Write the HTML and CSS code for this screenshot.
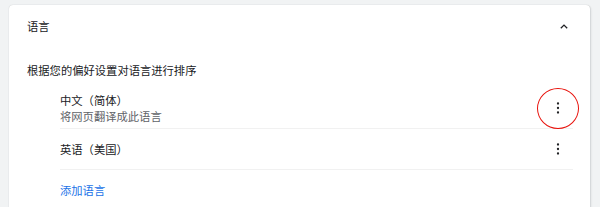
FILE: index.html
```html
<!DOCTYPE html>
<html lang="zh-CN">
<head>
  <meta charset="UTF-8">
  <meta name="viewport" content="width=device-width, initial-scale=1.0">
  <link rel="stylesheet" href="styles.css">
</head>
<body>

<div class="card">
  <div class="card-header">
    <span>语言</span>
    <svg class="chevron" width="10" height="7" viewBox="0 0 10 7"><path d="M1.8 5.3 L5 2.1 L8.2 5.3" fill="none" stroke="#202124" stroke-width="1.3"/></svg>
  </div>

  <div class="hint">根据您的偏好设置对语言进行排序</div>

  <div class="lang-list">
    <div class="lang-row">
      <div class="lang-text">
        <div class="lang-name">中文（简体）</div>
        <div class="lang-sub">将网页翻译成此语言</div>
      </div>
      <button class="more-btn">
        <svg width="4" height="14" viewBox="0 0 4 14"><circle cx="2" cy="2.5" r="1.15"/><circle cx="2" cy="7" r="1.15"/><circle cx="2" cy="11.5" r="1.15"/></svg>
        <span class="mark"></span>
      </button>
    </div>
    <div class="lang-row">
      <div class="lang-text">
        <div class="lang-name">英语（美国）</div>
      </div>
      <button class="more-btn">
        <svg width="4" height="14" viewBox="0 0 4 14"><circle cx="2" cy="2.5" r="1.15"/><circle cx="2" cy="7" r="1.15"/><circle cx="2" cy="11.5" r="1.15"/></svg>
      </button>
    </div>
    <div class="add-row">
      <a href="#" class="add-link">添加语言</a>
    </div>
  </div>
</div>

</body>
</html>
```

FILE: styles.css
```css
body {
  margin: 0;
  padding: 5px 10px 0 9px;
  background: #f1f3f4;
  font-family: "Noto Sans CJK SC", "Noto Sans", sans-serif;
  font-size: 11.3px;
  color: #202124;
}

.card {
  background: #fff;
  border-radius: 4px;
  box-shadow: 0 0 1px rgba(60, 64, 67, 0.3), 1px 1px 2px rgba(60, 64, 67, 0.15);
  height: 220px;
}

/* header with collapse arrow */
.card-header {
  height: 42px;
  line-height: 16px;
  display: flex;
  align-items: center;
  justify-content: space-between;
  padding: 0 21px 0 18px;
}

.chevron {
  display: block;
}

.hint {
  padding-left: 18px;
  margin-top: 13px;
  line-height: 20px;
}

.lang-list {
  margin: 8px 17px 0 51px;
}

.lang-row {
  display: flex;
  align-items: center;
  justify-content: space-between;
  min-height: 40px;
  border-bottom: 1px solid #f1f1f1;
}

.lang-row:first-child {
  padding: 4px 0;
  box-sizing: border-box;
}

.lang-name,
.lang-sub {
  line-height: 16px;
}

.lang-sub {
  color: #5f6368;
}

.more-btn {
  position: relative;
  width: 30px;
  height: 30px;
  padding: 0;
  border: none;
  background: none;
  display: flex;
  align-items: center;
  justify-content: center;
  cursor: pointer;
}

.more-btn svg {
  fill: #202124;
}

/* red annotation ring */
.mark {
  position: absolute;
  left: -6px;
  top: -5px;
  width: 40px;
  height: 39px;
  border: 1.3px solid #e8120c;
  border-radius: 50%;
}

.add-row {
  height: 40px;
  line-height: 16px;
  display: flex;
  align-items: center;
}

.add-link {
  color: #1a73e8;
  text-decoration: none;
}
```
